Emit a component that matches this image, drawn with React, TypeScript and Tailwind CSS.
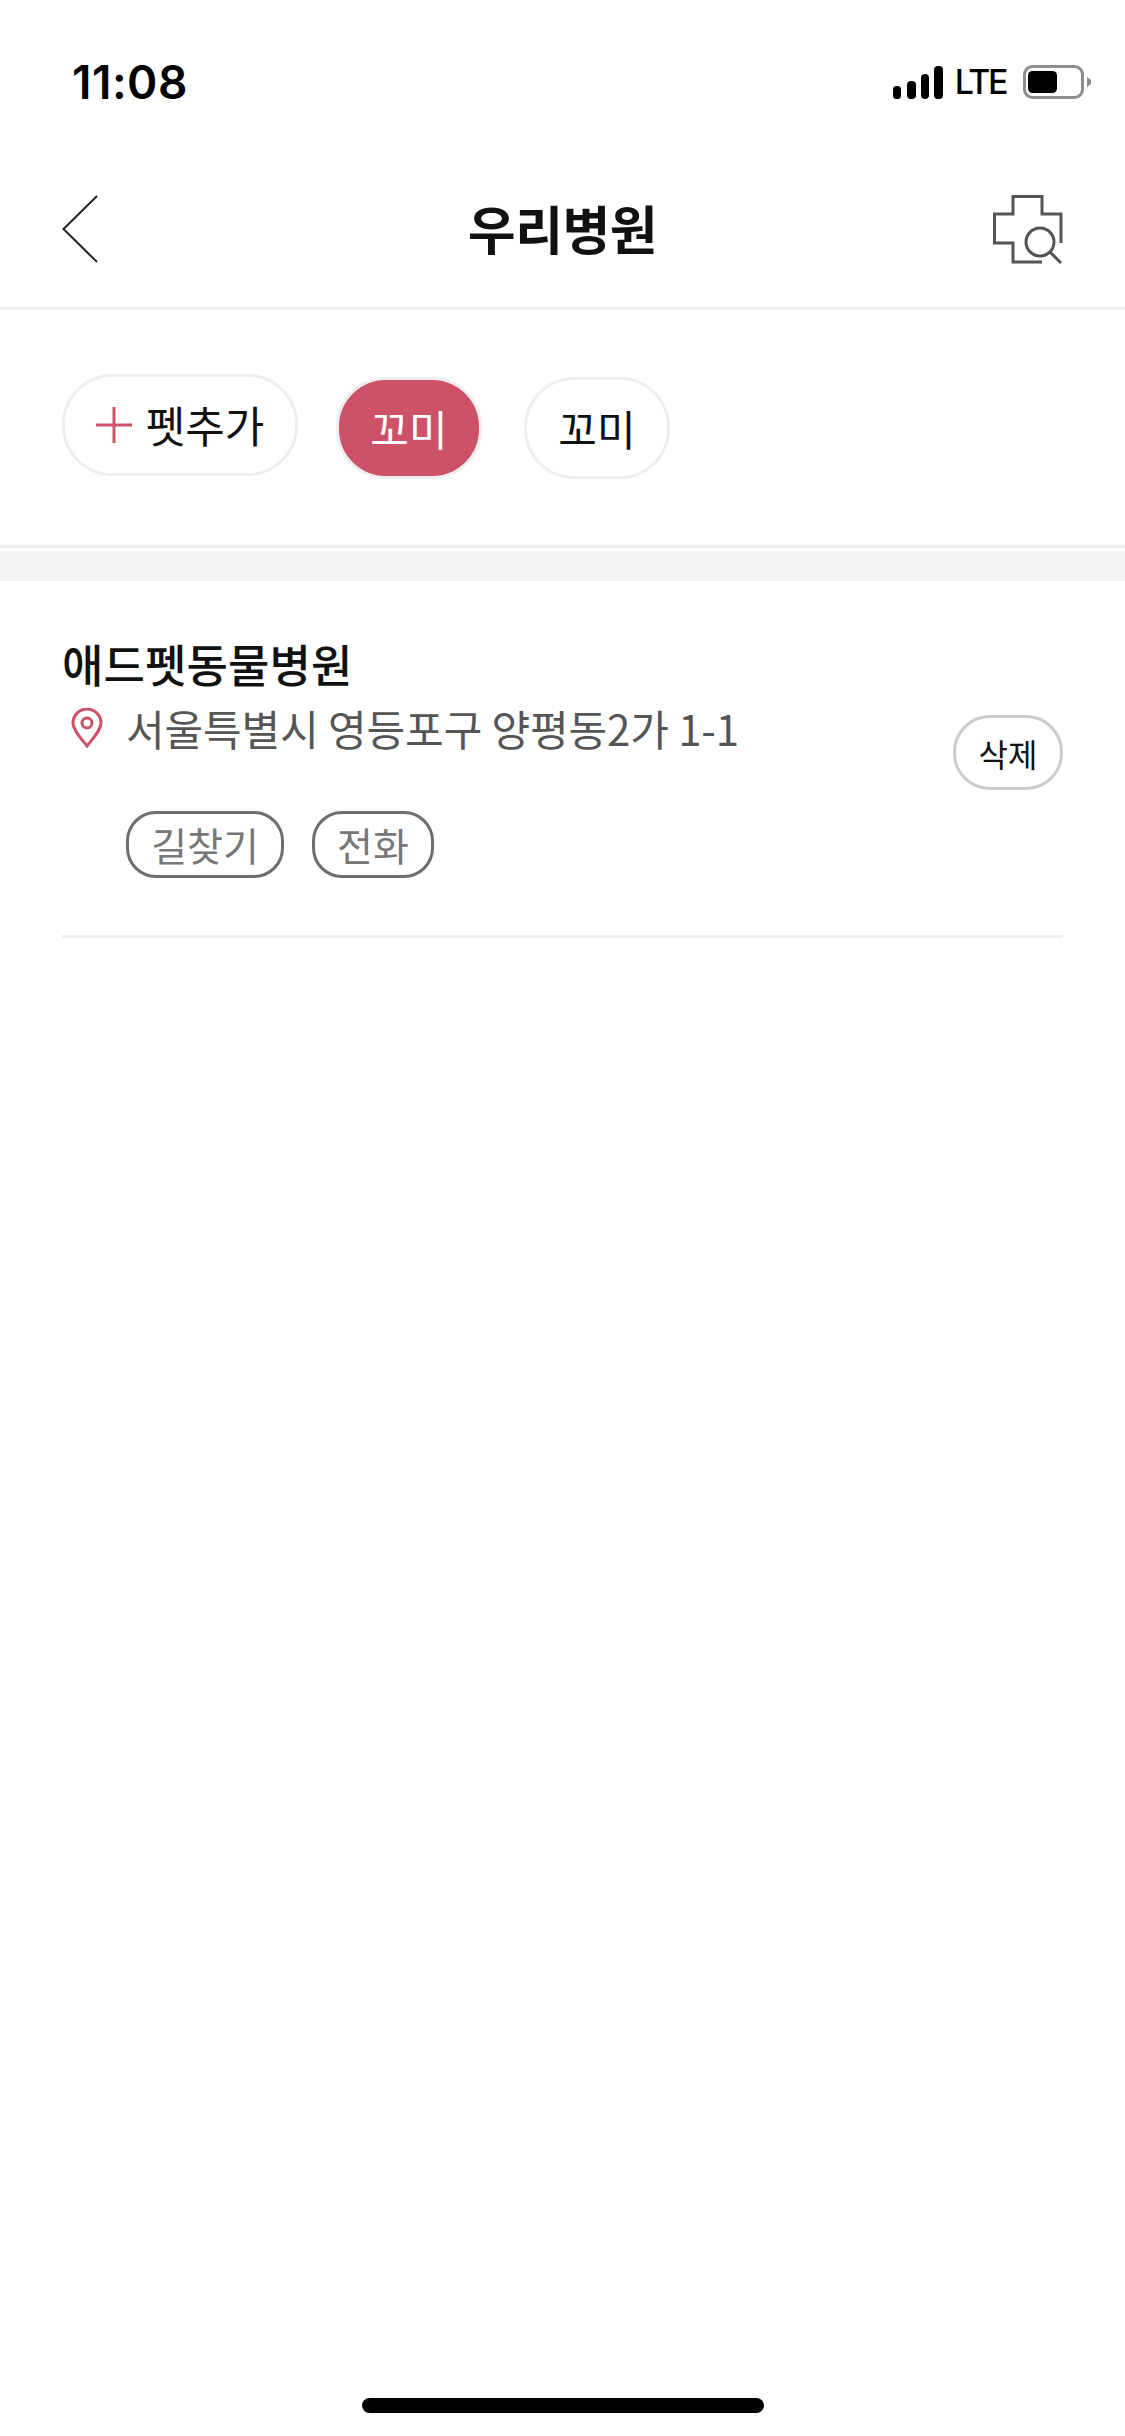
const kr = "font-['Noto_Sans_CJK_KR',sans-serif]";

function StatusBar() {
  return (
    <div className="flex h-[162px] items-start justify-between pl-[72px] pr-[34px] pt-[52px]">
      <span className="font-['Inter',sans-serif] text-[46px] leading-[60px] font-semibold tracking-[0.5px] text-black">11:08</span>
      <div className="flex items-center gap-[13px] pt-[13px]">
        <svg width="50" height="34" viewBox="0 0 50 34" fill="#000">
          <rect x="0" y="21" width="8" height="13" rx="3.5" />
          <rect x="14" y="16" width="9" height="18" rx="4" />
          <rect x="28" y="9" width="8" height="25" rx="4" />
          <rect x="41" y="1" width="9" height="33" rx="4" />
        </svg>
        <span className="-ml-[1px] font-['Inter',sans-serif] text-[34px] leading-[34px] font-medium tracking-[-2.5px] text-black">LTE</span>
        <svg width="70" height="34" viewBox="0 0 70 34" className="ml-[2px]">
          <rect x="3.5" y="1.5" width="58" height="31" rx="8" fill="none" stroke="#8e8e8e" strokeWidth="3" />
          <rect x="7" y="6" width="29" height="22" rx="4.5" fill="#000" />
          <path d="M66 12 L70 15 V19 L66 22 Z" fill="#8e8e8e" />
        </svg>
      </div>
    </div>
  );
}

function Header() {
  return (
    <div className="flex h-[148px] items-start justify-between border-b-[3px] border-[#eeeeee] px-[62px]">
      <div className="w-[70px] pt-[33px]">
        <svg width="36" height="68" viewBox="0 0 36 68" fill="none" stroke="#222" strokeWidth="2">
          <path d="M35 1 L1.5 34 L35 67" />
        </svg>
      </div>
      <h1 className={`${kr} text-[52px] leading-[72px] font-bold tracking-[-0.5px] text-[#111] pt-[30px]`}>우리병원</h1>
      <div className="w-[70px] pt-[33px]">
        <svg width="70" height="70" viewBox="0 0 70 70" fill="none" stroke="#555" strokeWidth="3">
          <path d="M68 48 V19 H49 V1.5 H20 V19 H1.5 V48 H20 V67 H49" />
          <circle cx="47" cy="47" r="14" />
          <path d="M57 57 L68 68" />
        </svg>
      </div>
    </div>
  );
}

function Pill({ active, children }: { active?: boolean; children: React.ReactNode }) {
  return (
    <div
      className={`${kr} flex h-[102px] w-[146px] items-center justify-center rounded-[50px] border-[3px] border-[#eeeeee] text-[42px] ${
        active ? "bg-[#cd5268] text-white" : "bg-white text-[#111]"
      }`}
    >
      {children}
    </div>
  );
}

function PetRow() {
  return (
    <div className="flex h-[238px] items-center border-b-[3px] border-[#eeeeee] pl-[62px]">
      <div className={`${kr} flex h-[102px] w-[236px] -translate-y-[3px] items-center justify-center gap-[14px] rounded-[50px] border-[3px] border-[#eeeeee] text-[43px] text-[#111]`}>
        <svg width="36" height="36" viewBox="0 0 36 36" stroke="#cd5268" strokeWidth="3">
          <path d="M0 18 H36 M18 0 V36" />
        </svg>
        <span>펫추가</span>
      </div>
      <div className="ml-[38px] flex gap-[42px]">
        <Pill active>꼬미</Pill>
        <Pill>꼬미</Pill>
      </div>
    </div>
  );
}

function Outline({ children, w }: { children: React.ReactNode; w: string }) {
  return (
    <div className={`${w} flex h-[67px] items-center justify-center rounded-[30px] border-[3px] border-[#6e6e6e] text-[39px] text-[#777]`}>
      {children}
    </div>
  );
}

function Hospital() {
  return (
    <div className={`${kr} mx-[62px] h-[357px] border-b-[3px] border-[#eeeeee] pt-[49px]`}>
      <div className="text-[45px] leading-[68px] font-medium tracking-[0.1px] text-[#111]">애드펫동물병원</div>
      <div className="flex items-start justify-between">
        <div>
          <div className="flex items-center">
            <svg width="32" height="40" viewBox="0 0 32 40" fill="none" stroke="#cd5268" strokeWidth="3" className="ml-[9px] mr-[23px]">
              <path d="M16 38 C9 29 2 22 2 15 A14 14 0 0 1 30 15 C30 22 23 29 16 38 Z" />
              <circle cx="16" cy="15" r="5" />
            </svg>
            <span className="text-[42px] leading-[60px] text-[#555] tracking-[-0.1px]">서울특별시 영등포구 양평동2가 1-1</span>
          </div>
          <div className="ml-[64px] mt-[53px] flex gap-[28px]">
            <Outline w="w-[158px]">길찾기</Outline>
            <Outline w="w-[122px]">전화</Outline>
          </div>
        </div>
        <div className="mt-[17px] flex h-[75px] w-[110px] items-center justify-center rounded-[37px] border-[3px] border-[#cccccc] text-[32px] text-[#111]">삭제</div>
      </div>
    </div>
  );
}

export default function App() {
  return (
    <div className="flex h-[2436px] w-[1125px] flex-col bg-white">
      <StatusBar />
      <Header />
      <PetRow />
      <div className="mt-[3px] h-[30px] bg-[#f5f5f5]" />
      <Hospital />
      <div className="mt-auto mb-[23px] h-[15px] w-[402px] self-center rounded-full bg-black" />
    </div>
  );
}
